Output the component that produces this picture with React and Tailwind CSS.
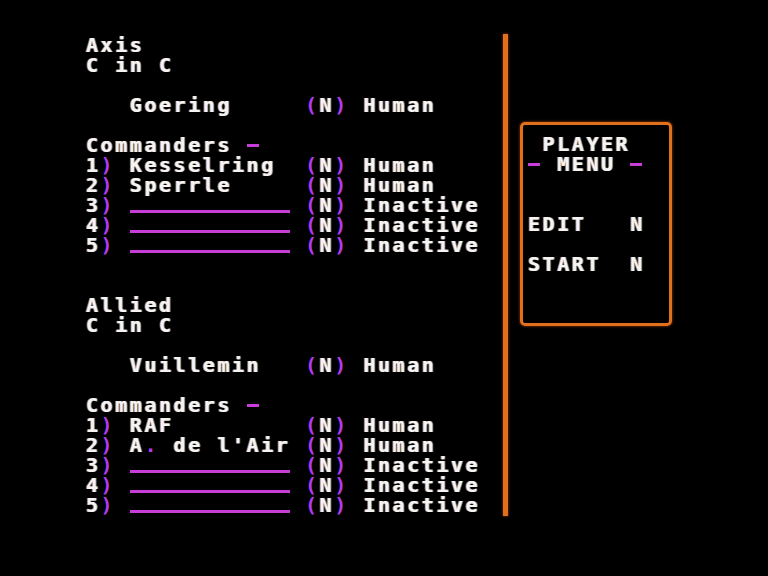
import React from "react";

const FRINGE = "[text-shadow:-1px_0_rgba(255,140,40,0.75),1px_0_rgba(70,170,255,0.75)]";

function P({ children }) {
  return <span className="text-[#b43cf0] [text-shadow:none]">{children}</span>;
}

function Dash() {
  return (
    <span className="inline-flex w-[14.6px] h-5 items-center">
      <span className="w-[12px] h-[3px] bg-[#c83cd8]" />
    </span>
  );
}

function Row({ children }) {
  return <div className="flex h-5 items-center whitespace-pre leading-5">{children}</div>;
}

function Blank() {
  return <div className="h-5" />;
}

function PlayerRow({ num, name, status }) {
  return (
    <Row>
      <span className="w-[43.8px]">
        {num ? (
          <>
            {num}
            <P>)</P>
          </>
        ) : null}
      </span>
      <span className="w-[175.2px] h-5 flex items-center">
        {name ? name : <span className="self-end mb-[2px] w-[160px] h-[3px] bg-[#c83cd8]" />}
      </span>
      <span className="w-[58.4px]">
        <P>(</P>N<P>)</P>
      </span>
      <span>{status}</span>
    </Row>
  );
}

const axis = [
  { num: "1", name: "Kesselring", status: "Human" },
  { num: "2", name: "Sperrle", status: "Human" },
  { num: "3", name: "", status: "Inactive" },
  { num: "4", name: "", status: "Inactive" },
  { num: "5", name: "", status: "Inactive" },
];

const allied = [
  { num: "1", name: "RAF", status: "Human" },
  {
    num: "2",
    name: (
      <>
        A<P>.</P> de l'Air
      </>
    ),
    status: "Human",
  },
  { num: "3", name: "", status: "Inactive" },
  { num: "4", name: "", status: "Inactive" },
  { num: "5", name: "", status: "Inactive" },
];

export default function App() {
  return (
    <div
      className={`w-[768px] h-[576px] bg-black flex text-[#f4f4f4] font-['DejaVu_Sans_Mono',monospace] font-bold text-[20px] leading-5 tracking-[2.56px] overflow-hidden ${FRINGE}`}
    >
      {/* Left roster */}
      <div className="w-[503px] pl-[86px] pt-[35px] flex flex-col">
        <Row>Axis</Row>
        <Row>C in C</Row>
        <Blank />
        <PlayerRow num="" name="Goering" status="Human" />
        <Blank />
        <Row>
          Commanders <Dash />
        </Row>
        {axis.map((p) => (
          <PlayerRow key={p.num} {...p} />
        ))}
        <Blank />
        <Blank />
        <Row>Allied</Row>
        <Row>C in C</Row>
        <Blank />
        <PlayerRow num="" name="Vuillemin" status="Human" />
        <Blank />
        <Row>
          Commanders <Dash />
        </Row>
        {allied.map((p) => (
          <PlayerRow key={p.num} {...p} />
        ))}
      </div>

      {/* Divider */}
      <div className="w-[5px] h-[482px] mt-[34px] bg-[#e0701c] shadow-[0_0_3px_#a04010]" />

      {/* Player menu */}
      <div className="ml-[12px] mt-[122px] w-[152px] h-[204px] border-[3px] border-[#e0701c] rounded-[5px] pl-[5px] pt-[9px] flex flex-col shadow-[0_0_3px_#a04010]">
        <Row>
          <span className="pl-[14.6px]">PLAYER</span>
        </Row>
        <Row>
          <Dash /> MENU <Dash />
        </Row>
        <Blank />
        <Blank />
        <Row>
          <span className="w-[102.2px]">EDIT</span>N
        </Row>
        <Blank />
        <Row>
          <span className="w-[102.2px]">START</span>N
        </Row>
      </div>
    </div>
  );
}
